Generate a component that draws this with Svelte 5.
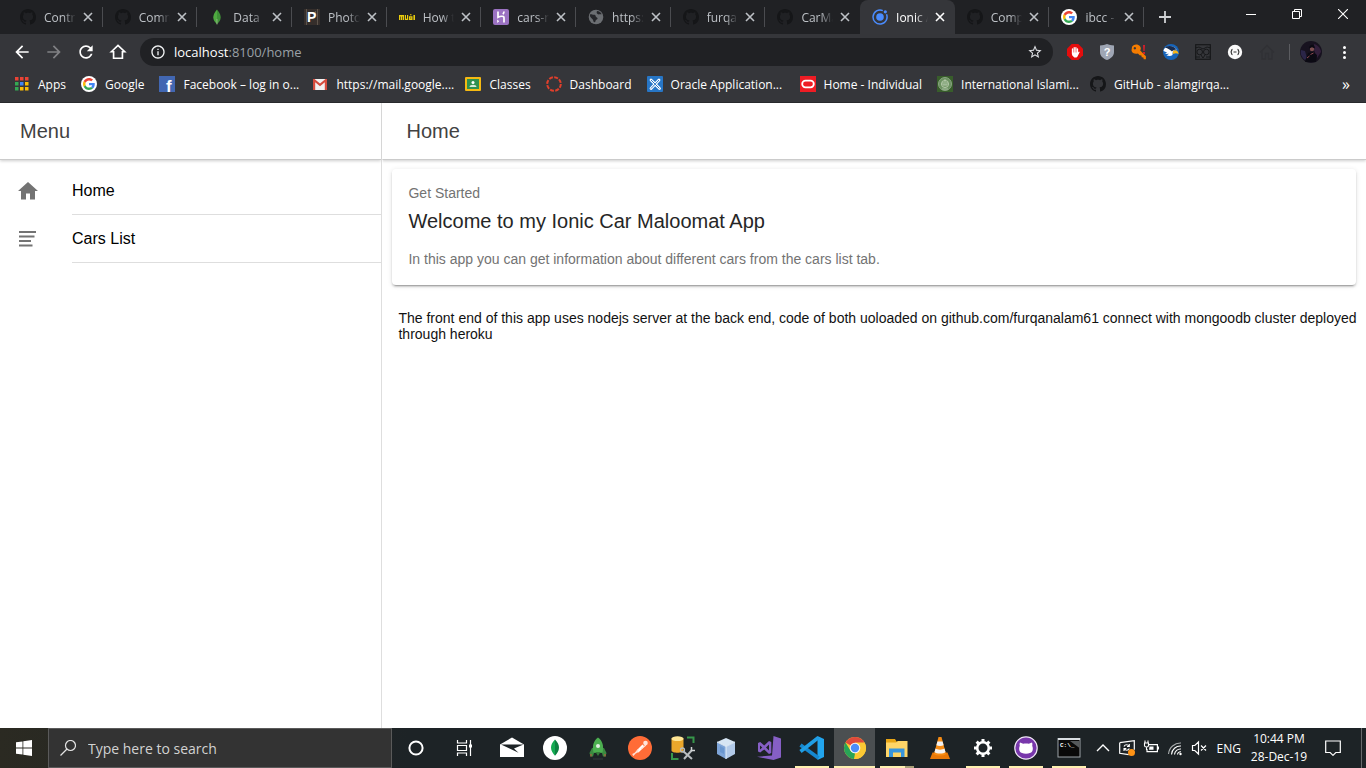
<script>
  const tabs = [
    { title: 'Contri', icon: 'github' },
    { title: 'Comm', icon: 'github' },
    { title: 'Data |', icon: 'leaf' },
    { title: 'Photo', icon: 'photo' },
    { title: 'How t', icon: 'mui' },
    { title: 'cars-n', icon: 'heroku' },
    { title: 'https:', icon: 'globe' },
    { title: 'furqan', icon: 'github' },
    { title: 'CarMa', icon: 'github' },
    { title: 'Ionic A', icon: 'ionic', active: true },
    { title: 'Comp', icon: 'github' },
    { title: 'ibcc -', icon: 'google' }
  ];

  const bookmarks = [
    { label: 'Apps', icon: 'apps' },
    { label: 'Google', icon: 'google' },
    { label: 'Facebook – log in o...', icon: 'facebook', clipped: true },
    { label: 'https://mail.google....', icon: 'gmail', clipped: true },
    { label: 'Classes', icon: 'classes' },
    { label: 'Dashboard', icon: 'canvas' },
    { label: 'Oracle Application...', icon: 'apex', clipped: true },
    { label: 'Home - Individual', icon: 'oracle' },
    { label: 'International Islami...', icon: 'crest', clipped: true },
    { label: 'GitHub - alamgirqa...', icon: 'github', clipped: true }
  ];

  const extensions = ['adblock', 'shield', 'key', 'eagle', 'owl', 'braces', 'ghosthome'];

  const apps = [
    { name: 'Mail', icon: 'mail' },
    { name: 'MongoDB Compass', icon: 'compass' },
    { name: 'Robo 3T', icon: 'rocket' },
    { name: 'Postman', icon: 'postman' },
    { name: 'SQL Developer', icon: 'database' },
    { name: 'VirtualBox', icon: 'cube' },
    { name: 'Visual Studio', icon: 'vs' },
    { name: 'Visual Studio Code', icon: 'vscode', state: 'open' },
    { name: 'Chrome', icon: 'chrome', state: 'current' },
    { name: 'File Explorer', icon: 'folder', state: 'stack' },
    { name: 'VLC', icon: 'cone' },
    { name: 'Settings', icon: 'gear', state: 'open' },
    { name: 'GitHub Desktop', icon: 'octocat', state: 'open' },
    { name: 'Command Prompt', icon: 'terminal', state: 'open' }
  ];

  const teeth = [0, 45, 90, 135, 180, 225, 270, 315];
</script>

{#snippet icon(name, size, box)}
  <svg class="icon" width={size} height={size} viewBox="0 0 {box} {box}" aria-hidden="true">
    {#if name === 'github'}
      <path fill="#151618" d="M8 0C3.58 0 0 3.58 0 8c0 3.54 2.29 6.53 5.47 7.59.4.07.55-.17.55-.38 0-.19-.01-.82-.01-1.49-2.01.37-2.53-.49-2.69-.94-.09-.23-.48-.94-.82-1.13-.28-.15-.68-.52-.01-.53.63-.01 1.08.58 1.23.82.72 1.21 1.87.87 2.33.66.07-.52.28-.87.51-1.07-1.78-.2-3.64-.89-3.64-3.95 0-.87.31-1.59.82-2.15-.08-.2-.36-1.02.08-2.12 0 0 .67-.21 2.2.82.64-.18 1.32-.27 2-.27s1.36.09 2 .27c1.53-1.04 2.2-.82 2.2-.82.44 1.1.16 1.92.08 2.12.51.56.82 1.27.82 2.15 0 3.07-1.87 3.75-3.65 3.95.29.25.54.73.54 1.48 0 1.07-.01 1.93-.01 2.2 0 .21.15.46.55.38A8.01 8.01 0 0 0 16 8c0-4.42-3.58-8-8-8z" />
    {:else if name === 'leaf'}
      <path fill="#4faa41" d="M8 .5C5 4 4.300 6.500 4.300 8.500c0 2.500 1.500 4.300 3.700 6.700z" />
      <path fill="#3f9138" d="M8 .5c3 3.500 3.700 6 3.700 8 0 2.500-1.500 4.300-3.700 6.700z" />
      <path stroke="#b8c4a8" stroke-width=".6" d="M8 10v5.500" />
    {:else if name === 'photo'}
      <rect width="16" height="16" fill="#352e2b" />
      <path stroke="#5d544b" stroke-width="1" d="M2.500 0v16M13.500 0v16M11.500 2v5" />
      <text x="3" y="13" font-family="Liberation Sans, sans-serif" font-size="14" font-weight="700" fill="#fff">P</text>
    {:else if name === 'mui'}
      <path fill="#e8cb0c" d="M0 6h5v5H3.600V7.600H3V11H2V7.600h-.6V11H0zM5.800 6h1.200v3.800h1V6h1.200v5H5.800zM10 7.200h3.500V11H10zM11.300 8.600v1h.9v-1zM11 5.300h1.500v1H11zM14.400 6H16v5h-1.600z" fill-rule="evenodd" />
    {:else if name === 'heroku'}
      <rect width="16" height="16" rx="2" fill="#9b72c2" />
      <path fill="none" stroke="#fff" stroke-width="1.700" d="M5 2.500v5.800c2.200-1.200 6-1.800 6 .5v4.700M11 2.500c0 1.300-.5 2-1 2.700" />
      <path fill="#fff" d="M4.200 10.500l2 1.700-2 1.700z" />
    {:else if name === 'globe'}
      <circle cx="8" cy="8" r="7.300" fill="#6b6e72" />
      <path fill="#25262a" d="M2 5.500c1.500-.8 2.500.6 4.200.3C8 5.500 7 7.800 8.800 8.500c1.500.6.8 1.600-.5 2.200-1 .5-.6 2.500-1.800 2.600-1.300 0-1-2.600-2.200-3.400C3 9 1.500 7.500 2 5.500zM9 2c2.200.2 4 1.300 4.700 3.200-1.200.4-2.400-.2-3.300.4C9.200 5.300 8 3.500 9 2z" />
    {:else if name === 'ionic'}
      <circle cx="8" cy="8" r="3.800" fill="#4a8cff" />
      <path fill="none" stroke="#4a8cff" stroke-width="1.500" d="M10.800 1.600A7 7 0 1 0 14.500 5.300" />
      <circle cx="13.300" cy="2.800" r="1.600" fill="#4a8cff" />
    {:else if name === 'google'}
      <circle cx="8" cy="8" r="8" fill="#fff" />
      <g transform="translate(2 2) scale(.25)">
        <path fill="#ea4335" d="M24 9.500c3.540 0 6.710 1.220 9.210 3.600l6.850-6.850C35.900 2.380 30.470 0 24 0 14.620 0 6.510 5.380 2.560 13.220l7.980 6.190C12.430 13.720 17.740 9.500 24 9.500z" />
        <path fill="#4285f4" d="M46.980 24.550c0-1.570-.15-3.090-.38-4.550H24v9.020h12.940c-.58 2.960-2.260 5.480-4.780 7.180l7.730 6c4.510-4.180 7.090-10.360 7.090-17.650z" />
        <path fill="#fbbc05" d="M10.530 28.590c-.48-1.450-.76-2.990-.76-4.590s.27-3.140.76-4.590l-7.980-6.190C.92 16.460 0 20.120 0 24c0 3.880.92 7.540 2.560 10.780l7.970-6.190z" />
        <path fill="#34a853" d="M24 48c6.480 0 11.930-2.130 15.890-5.810l-7.730-6c-2.150 1.450-4.920 2.300-8.160 2.300-6.260 0-11.570-4.220-13.470-9.910l-7.980 6.190C6.510 42.620 14.620 48 24 48z" />
      </g>
    {:else if name === 'apps'}
      <path fill="#ea4335" d="M1 1h3.500v3.500H1zM6 1h3.500v3.500H6zM11 1h3.500v3.500H11z" />
      <path fill="#34a853" d="M1 6h3.500v3.500H1zM1 11h3.500v3.500H1z" />
      <path fill="#4285f4" d="M6 6h3.500v3.500H6z" />
      <path fill="#fbbc05" d="M11 6h3.500v3.500H11zM6 11h3.500v3.500H6zM11 11h3.500v3.500H11z" />
    {:else if name === 'facebook'}
      <rect width="16" height="16" fill="#4267b2" />
      <text x="7" y="16" font-family="Liberation Sans, sans-serif" font-size="17" font-weight="700" fill="#fff">f</text>
    {:else if name === 'gmail'}
      <path fill="#f1f1f1" d="M1 3h14v11H1z" />
      <path fill="#d54b3d" d="M1 3h1.500L8 7.500 13.500 3H15v11h-2.200V6.300L8 10.200 3.200 6.300V14H1z" />
    {:else if name === 'classes'}
      <rect y="1" width="16" height="14" rx="1" fill="#f5b912" />
      <rect x="2" y="3" width="12" height="10" fill="#2e9150" />
      <circle cx="8" cy="6.500" r="1.500" fill="#fff" />
      <path fill="#d3ead9" d="M4.500 11c0-3 7-3 7 0z" />
    {:else if name === 'canvas'}
      <circle cx="8" cy="8" r="6.800" fill="none" stroke="#e13f2b" stroke-width="2" stroke-dasharray="4 1.340" />
    {:else if name === 'apex'}
      <rect width="16" height="16" rx="1" fill="#2776c6" />
      <path fill="none" stroke="#fff" stroke-width="2.800" stroke-linecap="round" d="M4 4l8.500 8.500M4 12.500L12 4" />
      <path fill="none" stroke="#2776c6" stroke-width="1" d="M4 4l8.500 8.500M4 12.500L12 4" />
    {:else if name === 'oracle'}
      <rect width="16" height="16" fill="#ee1c24" />
      <rect x="2.200" y="4.700" width="11.600" height="6.600" rx="3.300" fill="none" stroke="#fff" stroke-width="1.800" />
    {:else if name === 'crest'}
      <rect width="16" height="16" fill="#385d2b" />
      <circle cx="8" cy="8" r="6.500" fill="#6b9160" stroke="#8aa583" />
      <circle cx="8" cy="8" r="3.600" fill="#789c6c" stroke="#c1d0b6" stroke-width=".8" />
      <path fill="none" stroke="#b8cbb0" stroke-width=".8" d="M8 3v6M6 6v3h4V6M5 13h6" />
    {:else if name === 'adblock'}
      <path fill="#e40d0d" d="M4.700 0h6.600L16 4.700v6.600L11.300 16H4.700L0 11.300V4.700z" />
      <path fill="none" stroke="#fff" stroke-width="1.300" stroke-linecap="round" d="M5.500 5v5M7.200 3.700V9M8.900 3.700V9M10.500 5v5" />
      <path fill="#fff" d="M4.900 8.500H11l1-1 .7.600-2.200 4.500-1 .9H7.300l-2-2z" />
    {:else if name === 'shield'}
      <path fill="#9fa6b4" d="M1 1.500C4 1.500 6 .5 8 0c2 .5 4 1.500 7 1.500V8c0 4-3 6.500-7 8-4-1.500-7-4-7-8z" />
      <text x="4.800" y="12" font-family="Liberation Sans, sans-serif" font-size="11" font-weight="700" fill="#fff">?</text>
    {:else if name === 'key'}
      <path fill="#f57c00" fill-rule="evenodd" d="M1 3c1-3 6-3.500 8-.8 1.300 1.900.8 3.400.2 4.300l5.700 5.800v2.900h-2.200l-.3-1.800-1.700-.2-.3-1.800-1.800-.2-1.700-1.600C4 10.300 1 9.300.500 6.500zM3.800 3a1.200 1.200 0 1 0 .1 0z" />
      <path fill="#d51f2b" d="M12 1h2l-.4 6h-1.200zM12 8h2v2h-2z" />
    {:else if name === 'eagle'}
      <circle cx="8" cy="8" r="8" fill="#1665bb" />
      <path fill="#fff" d="M.5 7C1 2.500 9 0 13.800 5.500c-3 .3-4.300 1.700-4.300 4.500 1 1.500-2 2.500-6 1.500l2.500-1.800L2 10l2-1.500z" />
      <path fill="#182c4f" d="M2 3.500C6 1 11 2 13.500 5.500 11 5.700 10 6.500 9 7.500 7 5.500 5 4.500 2 3.500z" />
      <path fill="#f8b51b" d="M10 7c2.500-1.700 5.200-.6 5.600 3-2-1.200-3.500-1-5.600 0z" />
    {:else if name === 'owl'}
      <rect x=".7" y=".7" width="14.600" height="14.600" fill="none" stroke="#17181a" stroke-width="1.200" />
      <path fill="none" stroke="#17181a" stroke-width="1" d="M0 4l4-1 4 2 4-2 4 1M6 11l2 3 2-3M0 13h5M11 13h5" />
      <circle cx="4.700" cy="8" r="2.800" fill="none" stroke="#17181a" />
      <circle cx="11.300" cy="8" r="2.800" fill="none" stroke="#17181a" />
    {:else if name === 'braces'}
      <circle cx="8" cy="8" r="7.200" fill="#fafafa" />
      <path fill="none" stroke="#333" stroke-width="1.200" d="M5.500 5.300C4 5.500 5 7.700 3.700 8 5 8.300 4 10.500 5.500 10.700M10.500 5.300c1.500.2.5 2.400 1.800 2.700-1.300.3-.3 2.500-1.800 2.700M6.500 8h3" />
    {:else if name === 'ghosthome'}
      <path fill="none" stroke="#303135" stroke-width="1.300" d="M1 8.500l7-7 7 7M3 7v8h3.500V9.500h3V15H13V7" />
    {:else if name === 'back'}
      <path fill="#fff" d="M20 11H7.830l5.590-5.590L12 4l-8 8 8 8 1.410-1.410L7.830 13H20v-2z" />
    {:else if name === 'forward'}
      <path fill="#808184" d="M12 4l-1.410 1.410L16.170 11H4v2h12.170l-5.580 5.590L12 20l8-8z" />
    {:else if name === 'reload'}
      <path fill="#fff" d="M17.650 6.350C16.200 4.900 14.210 4 12 4c-4.420 0-7.990 3.580-7.990 8s3.570 8 7.990 8c3.730 0 6.840-2.550 7.730-6h-2.080c-.82 2.330-3.040 4-5.650 4-3.310 0-6-2.690-6-6s2.690-6 6-6c1.660 0 3.140.69 4.220 1.780L13 11h7V4l-2.350 2.350z" />
    {:else if name === 'homeoutline'}
      <path fill="none" stroke="#fff" stroke-width="2" d="M4 11.700L12 4l8 7.700h-2.700V19.500H6.700v-7.800z" />
    {:else if name === 'info'}
      <path fill="#f1f3f4" d="M11 7h2v2h-2zm0 4h2v6h-2zm1-9C6.480 2 2 6.480 2 12s4.480 10 10 10 10-4.480 10-10S17.520 2 12 2zm0 18c-4.410 0-8-3.590-8-8s3.590-8 8-8 8 3.590 8 8-3.590 8-8 8z" />
    {:else if name === 'star'}
      <path fill="#dfe1e5" d="M22 9.240l-7.190-.62L12 2 9.190 8.630 2 9.240l5.460 4.730L5.820 21 12 17.270 18.180 21l-1.630-7.030L22 9.240zM12 15.400l-3.760 2.270 1-4.280-3.320-2.880 4.380-.38L12 6.100l1.710 4.040 4.380.38-3.320 2.880 1 4.280L12 15.400z" />
    {:else if name === 'avatar'}
      <circle cx="11" cy="11" r="11" fill="#17121f" />
      <path fill="#33203c" d="M14 3c4 1 7 5 7 8l-4 6-3-8z" />
      <path fill="#2a2548" d="M1 9l4 1 2 7-2 2C2 17 0 13 1 9z" />
      <circle cx="12" cy="8" r="2.200" fill="#7d4f50" />
      <path fill="#0b0a13" d="M9 7.500c.5-5 6-5 6 0l-3-1.200zM5 21l3-9 5-1 4 3-1 7z" />
      <path stroke="#8d4850" stroke-width="1" d="M10.500 13.500l3-1.500M7 17l2.500-2" />
    {:else if name === 'house'}
      <path fill="#737373" d="M10 20.500v-6h4v6h5v-8.500h3L12 3 2 12h3v8.500z" />
    {:else if name === 'list'}
      <path fill="#737373" d="M3 4h17v2H3zM3 8.500h15.500v2H3zM3 13h12v2H3zM3 17.500h13.500v2H3z" />
    {:else if name === 'windows'}
      <path fill="#fff" d="M0 2.300L6.500 1.400v6.200H0zM7.300 1.300L16 0v7.600H7.300zM0 8.400h6.500v6.200L0 13.700zM7.300 8.400H16V16l-8.700-1.300z" />
    {:else if name === 'search'}
      <circle cx="10.500" cy="5.500" r="5" fill="none" stroke="#e4e4e4" stroke-width="1.200" />
      <path stroke="#e4e4e4" stroke-width="1.300" d="M7 9L.5 15.500" />
    {:else if name === 'cortana'}
      <circle cx="8" cy="8" r="6.600" fill="none" stroke="#fff" stroke-width="2" />
    {:else if name === 'taskview'}
      <path fill="none" stroke="#fff" stroke-width="1.200" d="M1.500 0v3h9V0M1.500 16v-3h9v3M1.500 5.500h9v5h-9zM14.500 0v16" />
      <path fill="#fff" d="M13 4.500h3v3h-3z" />
    {:else if name === 'mail'}
      <path fill="#fff" d="M2 10.500L14 3.500l12 7V23H2z" />
      <path fill="#1d2326" d="M3 10.500h22.500L16 14.500l4.500 4.300L10.500 14z" />
    {:else if name === 'compass'}
      <circle cx="14" cy="14" r="12" fill="#fff" />
      <path fill="#13aa52" d="M14 5.500c-3 3-4 5.500-4 8.200 0 3.300 2 5.600 4 8z" />
      <path fill="#0b8140" d="M14 5.500c3 3 4 5.500 4 8.200 0 3.300-2 5.600-4 8z" />
    {:else if name === 'rocket'}
      <path fill="#3b8a40" d="M8 14l-2.500 5 1 3.500H9L10 19h8l1 3.500h2.500l1-3.500-2.500-5z" />
      <path fill="#4caf50" d="M14 3.500c-4.500 3.500-6 8-4.500 15h9c1.500-7 0-11.500-4.500-15z" />
      <circle cx="14" cy="12" r="2" fill="#e2eee2" />
      <path stroke="#9b6740" stroke-width="1.500" d="M7 20v2.500M21 20v2.500" />
      <path fill="#367b3a" d="M11.500 18h5l-2.500 4z" />
      <path stroke="#353b3d" stroke-width="1" d="M9 25h10" />
    {:else if name === 'postman'}
      <circle cx="14" cy="14" r="12" fill="#ff6c37" />
      <path stroke="#fff" stroke-width="2.800" d="M11.500 17.500l6-6" />
      <circle cx="19.500" cy="9" r="2.300" fill="#ffe4d9" />
      <path fill="none" stroke="#ffe0d5" stroke-width="1.200" d="M6.500 20.500l6-3M7 21.500l5.500-6M15 15l5-4" />
    {:else if name === 'database'}
      <path fill="#eba72b" d="M2.500 4.500h12v12c0 3-12 3-12 0z" />
      <ellipse cx="8.500" cy="4.700" rx="6" ry="2.400" fill="#ffe694" />
      <path fill="none" stroke="#37974a" stroke-width="2" d="M18 3.500h6.500V9M3 19v6h6.500" />
      <path fill="none" stroke="#b9bdc0" stroke-width="2" d="M14 17l9 8M15 25l8-9" />
      <circle cx="13.500" cy="16" r="2" fill="none" stroke="#b9bdc0" stroke-width="1.300" />
      <path fill="none" stroke="#d2d5d7" stroke-width="1.500" d="M22.500 13v3.500H26" />
    {:else if name === 'cube'}
      <path fill="#d6e5f4" d="M14 4l9 4-9 4.500L5 8z" />
      <path fill="#7da4d8" d="M5 8l9 4.500V25l-9-5z" />
      <path fill="#b2cae9" d="M23 8l-9 4.500V25l9-5z" />
      <path fill="none" stroke="#e4effb" stroke-width="1" d="M5 8l9 4.500L23 8M14 12.500V25" />
      <path fill="#5687c6" opacity=".5" d="M8 12l4 2v6l-4-2z" />
    {:else if name === 'vs'}
      <path fill="#865fc5" fill-rule="evenodd" d="M18.500 2L26 4.500v19L18.500 26 2 22.800l15-1.300zM3 9l2.200-1 4 3.500L14 7l2.300 1v11L14 20l-4.800-4.600-4 3.200L3 17.500zM5 11.500v4L7.300 13.500zM14 10.500l-3 3 3 3z" />
    {:else if name === 'vscode'}
      <path fill="#22a5ee" d="M19.500 2L26 5v18l-6.500 3z" />
      <path fill="none" stroke="#1688d0" stroke-width="3.600" d="M2.500 11l18 13" />
      <path fill="none" stroke="#209ee5" stroke-width="3.600" d="M2.500 17.500L20.500 3.500" />
    {:else if name === 'chrome'}
      <circle cx="14" cy="14" r="11" fill="#fcc934" />
      <path fill="#df4a3c" d="M14 14L4.500 8.500a11 11 0 0 1 19 0z" />
      <path fill="#28a457" d="M4.470 8.500L9.700 17l4.300 2.500-1 5.450A11 11 0 0 1 4.470 8.500z" />
      <path fill="#fcc934" d="M14 8.500h9.500A11 11 0 0 1 13 25l6-9z" />
      <circle cx="14" cy="14" r="5.300" fill="#f5f5f5" />
      <circle cx="14" cy="14" r="4.200" fill="#4b8df8" />
    {:else if name === 'folder'}
      <path fill="#e8a515" d="M3 5h9l1.500 2.500H24V12H3z" />
      <path fill="#ffd567" d="M3 8.500h10l2-1.500h9.500v16H3z" />
      <path fill="#3995dc" d="M6 14.500h15.500V23H18v-4.500H10V23H6z" />
    {:else if name === 'cone'}
      <path fill="#e77808" d="M6.500 18.500h15L24 25H4z" />
      <path fill="#f78c14" d="M12.500 3h3l4.500 17c-1.500 2-10.500 2-12 0z" />
      <path fill="#f3f3f3" d="M11.400 7.500h5.200l1 3.800c-2 1-5.200 1-7.200 0zM9.500 14.500c2 1.500 7 1.500 9 0l1 3.500c-2 2-9 2-11 0z" />
    {:else if name === 'gear'}
      <circle cx="14" cy="14" r="5.800" fill="none" stroke="#fff" stroke-width="2.600" />
      {#each teeth as angle}
        <rect x="12.500" y="5" width="3" height="4" fill="#fff" transform="rotate({angle} 14 14)" />
      {/each}
    {:else if name === 'octocat'}
      <circle cx="14" cy="14" r="11.200" fill="#7837ab" stroke="#efe7f4" stroke-width="1.200" />
      <path fill="#fff" d="M8 8.500l3.200 1.300c1.500-.4 4.100-.4 5.600 0L20 8.500c.6 1.500.4 2.600.2 3.300 1.700 4.400.2 8-6.200 8s-7.900-3.600-6.200-8c-.2-.9-.4-1.800.2-3.300z" />
    {:else if name === 'terminal'}
      <rect x="3" y="4.500" width="22" height="18.500" fill="#090909" stroke="#9da3a7" />
      <path fill="#d9dee2" d="M3 4h22v2H3z" />
      <path fill="#55595b" d="M15 7h9.500v7z" />
      <text x="5" y="13" font-family="Liberation Mono, monospace" font-size="6" font-weight="700" fill="#fff">C:\_</text>
    {:else if name === 'chevron'}
      <path fill="none" stroke="#fff" stroke-width="1.400" d="M2 11l6-6 6 6" />
    {:else if name === 'update'}
      <path fill="none" stroke="#fff" stroke-width="1.200" d="M.7 2.700L15.300.7v9M.7 2.700v10.600l9 1.300" />
      <path fill="none" stroke="#fff" stroke-width="1.100" d="M5 6.500c1-2.200 4-2.200 5-.2M10.300 4v2.500H8M10.300 8.500c-1 2.200-4 2.200-5 .3M5 11V8.500h2.300" />
      <circle cx="12.500" cy="12.500" r="3.500" fill="#ff9315" />
    {:else if name === 'battery'}
      <path fill="none" stroke="#fff" stroke-width="1.200" d="M6 4.600h8.400v7H4V9" />
      <path fill="#fff" d="M6.500 6.500h4v3.300H6zM15 6.500h1v3h-1z" />
      <path fill="none" stroke="#fff" stroke-width="1.100" d="M1 3h5M2 .5V3M5 .5V3M1.500 3v2.500c0 2 4 2 4 0V3M3.500 7v3" />
    {:else if name === 'wifi'}
      <path fill="none" stroke="#a9adae" stroke-width="1.100" d="M1.500 14A12 12 0 0 1 14 3" />
      <path fill="none" stroke="#fff" stroke-width="1.100" d="M4.500 14.500A9 9 0 0 1 14 6M7.500 14.500A6 6 0 0 1 14 9M10.500 14.500a3 3 0 0 1 3.500-2.700" />
      <circle cx="13.500" cy="14" r="1.200" fill="#fff" />
    {:else if name === 'volume'}
      <path fill="none" stroke="#fff" stroke-width="1.200" d="M1.500 5.500h2.300L7.500 2v12l-3.700-3.500H1.500zM10 5.500l5 5M15 5.500l-5 5" />
    {:else if name === 'message'}
      <path fill="none" stroke="#fff" stroke-width="1.200" d="M.7 1h14.600v11.500h-4.500L8 15.300l-2.800-2.800H.7z" />
    {:else if name === 'close'}
      <path stroke="currentColor" stroke-width="1.600" d="M1 1l8 8M9 1L1 9" />
    {:else if name === 'plus'}
      <path stroke="#cfd1d4" stroke-width="1.800" d="M6 0v12M0 6h12" />
    {:else if name === 'minimize'}
      <path stroke="#fff" d="M0 5.500h10" />
    {:else if name === 'restore'}
      <path fill="none" stroke="#fff" d="M.5 2.500h7v7h-7zM2.500 2V.5h7v7H8" />
    {:else if name === 'exit'}
      <path stroke="#fff" stroke-width="1.100" d="M0 0l10 10M10 0L0 10" />
    {/if}
  </svg>
{/snippet}

<div class="screen">
  <header class="browser">
    <div class="strip">
      <div class="tabs">
        {#each tabs as tab, i}
          <div class="tab" class:active={tab.active} class:divided={!tab.active && !tabs[i + 1]?.active}>
            {@render icon(tab.icon, 16, 16)}
            <span class="title">{tab.title}</span>
            <button class="close" aria-label="Close tab">{@render icon('close', 10, 10)}</button>
          </div>
        {/each}
      </div>
      <button class="newtab" aria-label="New tab">{@render icon('plus', 12, 12)}</button>
      <div class="window">
        <button aria-label="Minimize">{@render icon('minimize', 10, 10)}</button>
        <button aria-label="Restore">{@render icon('restore', 10, 10)}</button>
        <button aria-label="Close">{@render icon('exit', 10, 10)}</button>
      </div>
    </div>

    <div class="toolbar">
      <button class="tool" aria-label="Back">{@render icon('back', 20, 24)}</button>
      <button class="tool" aria-label="Forward">{@render icon('forward', 20, 24)}</button>
      <button class="tool" aria-label="Reload">{@render icon('reload', 20, 24)}</button>
      <button class="tool" aria-label="Home page">{@render icon('homeoutline', 20, 24)}</button>
      <div class="address">
        {@render icon('info', 16, 24)}
        <a class="url" href="#home">localhost<span>:8100/home</span></a>
        <button class="bare" aria-label="Bookmark this page">{@render icon('star', 16, 24)}</button>
      </div>
      {#each extensions as extension}
        <button class="tool" aria-label={extension}>{@render icon(extension, 16, 16)}</button>
      {/each}
      <span class="rule"></span>
      <button class="profile" aria-label="Profile">{@render icon('avatar', 22, 22)}</button>
      <button class="dots" aria-label="More"><i></i><i></i><i></i></button>
    </div>

    <nav class="bookmarks">
      {#each bookmarks as mark}
        <a href="#home" class:clipped={mark.clipped}>{@render icon(mark.icon, 16, 16)}<span>{mark.label}</span></a>
      {/each}
      <button class="more" aria-label="More bookmarks">»</button>
    </nav>
  </header>

  <div class="page">
    <aside>
      <div class="bar menubar">Menu</div>
      <nav class="menu">
        <a href="#home">{@render icon('house', 24, 24)}<span>Home</span></a>
        <a href="#list">{@render icon('list', 24, 24)}<span>Cars List</span></a>
      </nav>
    </aside>
    <main>
      <div class="bar homebar">Home</div>
      <section class="card">
        <div class="subtitle">Get Started</div>
        <h1>Welcome to my Ionic Car Maloomat App</h1>
        <p>In this app you can get information about different cars from the cars list tab.</p>
      </section>
      <p class="note">The front end of this app uses nodejs server at the back end, code of both uoloaded on github.com/furqanalam61 connect with mongoodb cluster deployed through heroku</p>
    </main>
  </div>

  <footer class="taskbar">
    <button class="start" aria-label="Start">{@render icon('windows', 16, 16)}</button>
    <label class="search">
      {@render icon('search', 16, 16)}
      <input type="text" placeholder="Type here to search" aria-label="Type here to search" />
    </label>
    <button class="start" aria-label="Cortana">{@render icon('cortana', 16, 16)}</button>
    <button class="start" aria-label="Task view">{@render icon('taskview', 16, 16)}</button>
    <div class="apps">
      {#each apps as app}
        <button class="app {app.state ?? ''}" aria-label={app.name}>{@render icon(app.icon, 28, 28)}</button>
      {/each}
    </div>
    <div class="tray">
      <button class="bare" aria-label="Show hidden icons">{@render icon('chevron', 16, 16)}</button>
      <button class="bare" aria-label="Updates">{@render icon('update', 16, 16)}</button>
      <button class="bare" aria-label="Battery">{@render icon('battery', 16, 16)}</button>
      <button class="bare" aria-label="Network">{@render icon('wifi', 16, 16)}</button>
      <button class="bare" aria-label="Volume">{@render icon('volume', 16, 16)}</button>
      <span class="language">ENG</span>
      <time><span>10:44 PM</span><span>28-Dec-19</span></time>
      <button class="bare notices" aria-label="Notifications">{@render icon('message', 16, 16)}</button>
    </div>
    <button class="desktop" aria-label="Show desktop"></button>
  </footer>
</div>

<style>
  :global(body) {
    margin: 0;
  }

  .screen {
    display: flex;
    flex-direction: column;
    min-height: 100vh;
    background: #fff;
    font-family: 'Liberation Sans', sans-serif;
  }

  button {
    display: flex;
    align-items: center;
    justify-content: center;
    padding: 0;
    border: 0;
    background: none;
    color: inherit;
    font: inherit;
  }

  a {
    color: inherit;
    text-decoration: none;
  }

  .icon {
    display: block;
    flex: none;
  }

  .browser,
  .taskbar {
    font-family: 'Open Sans', 'Noto Sans', sans-serif;
    font-size: 12px;
  }

  .browser {
    background: #35363a;
    border-bottom: 1px solid #28292c;
    color: #f1f3f4;
  }

  .strip {
    display: flex;
    height: 34px;
    padding-left: 8px;
    background: #202124;
  }

  .tabs {
    display: flex;
    flex: 1;
    min-width: 0;
  }

  .tab {
    display: flex;
    flex: 1;
    align-items: center;
    min-width: 0;
    padding: 0 10px 0 12px;
    position: relative;
    color: #bdc1c6;
  }

  .tab.divided::after {
    content: '';
    position: absolute;
    right: 0;
    top: 7px;
    width: 1px;
    height: 20px;
    background: #4b4c50;
  }

  .tab.active {
    border-radius: 8px 8px 0 0;
    background: #35363a;
    color: #fff;
  }

  .title {
    flex: 1;
    min-width: 0;
    margin: 0 7px 0 8px;
    overflow: hidden;
    white-space: nowrap;
    mask-image: linear-gradient(to right, #000 60%, transparent);
  }

  .newtab {
    width: 84px;
    padding-right: 42px;
  }

  .window {
    display: flex;
  }

  .window button {
    width: 46px;
    height: 28px;
  }

  .toolbar {
    display: flex;
    align-items: center;
    height: 36px;
    padding: 0 8px 0 6px;
  }

  .tool {
    width: 32px;
    height: 28px;
  }

  .address {
    display: flex;
    flex: 1;
    align-items: center;
    height: 28px;
    margin: 0 6px;
    padding: 0 10px;
    border-radius: 14px;
    background: #202124;
    font-size: 13px;
  }

  .url {
    flex: 1;
    margin-left: 8px;
    color: #fff;
  }

  .url span {
    color: #9aa0a6;
  }

  .rule {
    width: 1px;
    height: 16px;
    margin: 0 10px 0 6px;
    background: #5b5c60;
  }

  .profile {
    width: 22px;
  }

  .dots {
    flex-direction: column;
    gap: 2px;
    width: 28px;
    margin-left: 8px;
  }

  .dots i {
    width: 3px;
    height: 3px;
    border-radius: 50%;
    background: #fff;
  }

  .bookmarks {
    display: flex;
    align-items: center;
    gap: 15px;
    height: 28px;
    padding: 0 16px 4px 14px;
    color: #fff;
    white-space: nowrap;
  }

  .bookmarks a {
    display: flex;
    align-items: center;
    gap: 8px;
  }

  .bookmarks .clipped span {
    width: 114px;
  }

  .more {
    margin-left: auto;
    font-size: 16px;
  }

  .page {
    display: flex;
    flex: 1;
  }

  aside {
    box-sizing: border-box;
    width: 28%;
    border-right: 1px solid #dedede;
  }

  main {
    flex: 1;
    min-width: 0;
  }

  .bar {
    height: 56px;
    box-shadow:
      0 1px 0 #cbcbcb,
      0 2px 3px rgba(0, 0, 0, 0.2);
    clip-path: inset(0 0 -6px 0);
    color: #424242;
    font-size: 20px;
    line-height: 56px;
  }

  .menubar {
    padding-left: 20px;
  }

  .homebar {
    padding-left: 24px;
  }

  .menu {
    padding-top: 8px;
    font-size: 16px;
    color: #000;
  }

  .menu a {
    display: flex;
    align-items: center;
    gap: 32px;
    padding-left: 16px;
  }

  .menu span {
    flex: 1;
    border-bottom: 1px solid #dedede;
    line-height: 47px;
  }

  .card {
    margin: 10px;
    padding: 16px;
    border-radius: 4px;
    box-shadow:
      0 3px 1px -2px rgba(0, 0, 0, 0.2),
      0 2px 2px 0 rgba(0, 0, 0, 0.14),
      0 1px 5px 0 rgba(0, 0, 0, 0.12);
    color: #737373;
    font-size: 14px;
    line-height: 16px;
  }

  h1 {
    margin: 8px 0 16px;
    color: #262626;
    font-size: 20px;
    font-weight: 400;
    line-height: 24px;
  }

  .card p {
    margin: 0;
    line-height: 20px;
  }

  .note {
    margin: 25px 8px 0 16px;
    font-size: 14px;
    line-height: 16px;
    color: #111;
  }

  .taskbar {
    display: flex;
    height: 40px;
    background: linear-gradient(to right, #2b2a22, #1d2326 30%);
    color: #fff;
  }

  .start {
    width: 48px;
  }

  .search {
    display: flex;
    align-items: center;
    box-sizing: border-box;
    width: 344px;
    padding-left: 11px;
    border: 1px solid #5a5a5a;
    background: #333;
  }

  .search input {
    flex: 1;
    min-width: 0;
    padding: 0 12px;
    border: 0;
    outline: 0;
    background: none;
    color: #fff;
    font: inherit;
    font-size: 14px;
  }

  .search input::placeholder {
    color: #d2d2d2;
    opacity: 1;
  }

  .apps {
    display: flex;
    flex: 1;
    padding-left: 3px;
  }

  .app {
    flex: 1;
    margin-right: 1px;
    background-repeat: no-repeat;
    background-position: bottom;
  }

  .app.open {
    background-image: linear-gradient(#fdf0b0, #fdf0b0);
    background-size: 34px 2px;
  }

  .app.current {
    background-color: #4b4f51;
    background-image: linear-gradient(#fdf0b0, #fdf0b0);
    background-size: 100% 2px;
  }

  .app.stack {
    background-image: linear-gradient(to right, #fdf0b0 74%, #a89f77 74%);
    background-size: 34px 2px;
  }

  .tray {
    display: flex;
    align-items: center;
    gap: 8px;
    padding: 0 20px 0 4px;
  }

  .language {
    margin-left: 2px;
  }

  time {
    display: flex;
    flex-direction: column;
    align-items: center;
    width: 60px;
    line-height: 18px;
  }

  .notices {
    margin-left: 8px;
  }

  .desktop {
    width: 5px;
    border-left: 1px solid #666a6c;
  }
</style>
